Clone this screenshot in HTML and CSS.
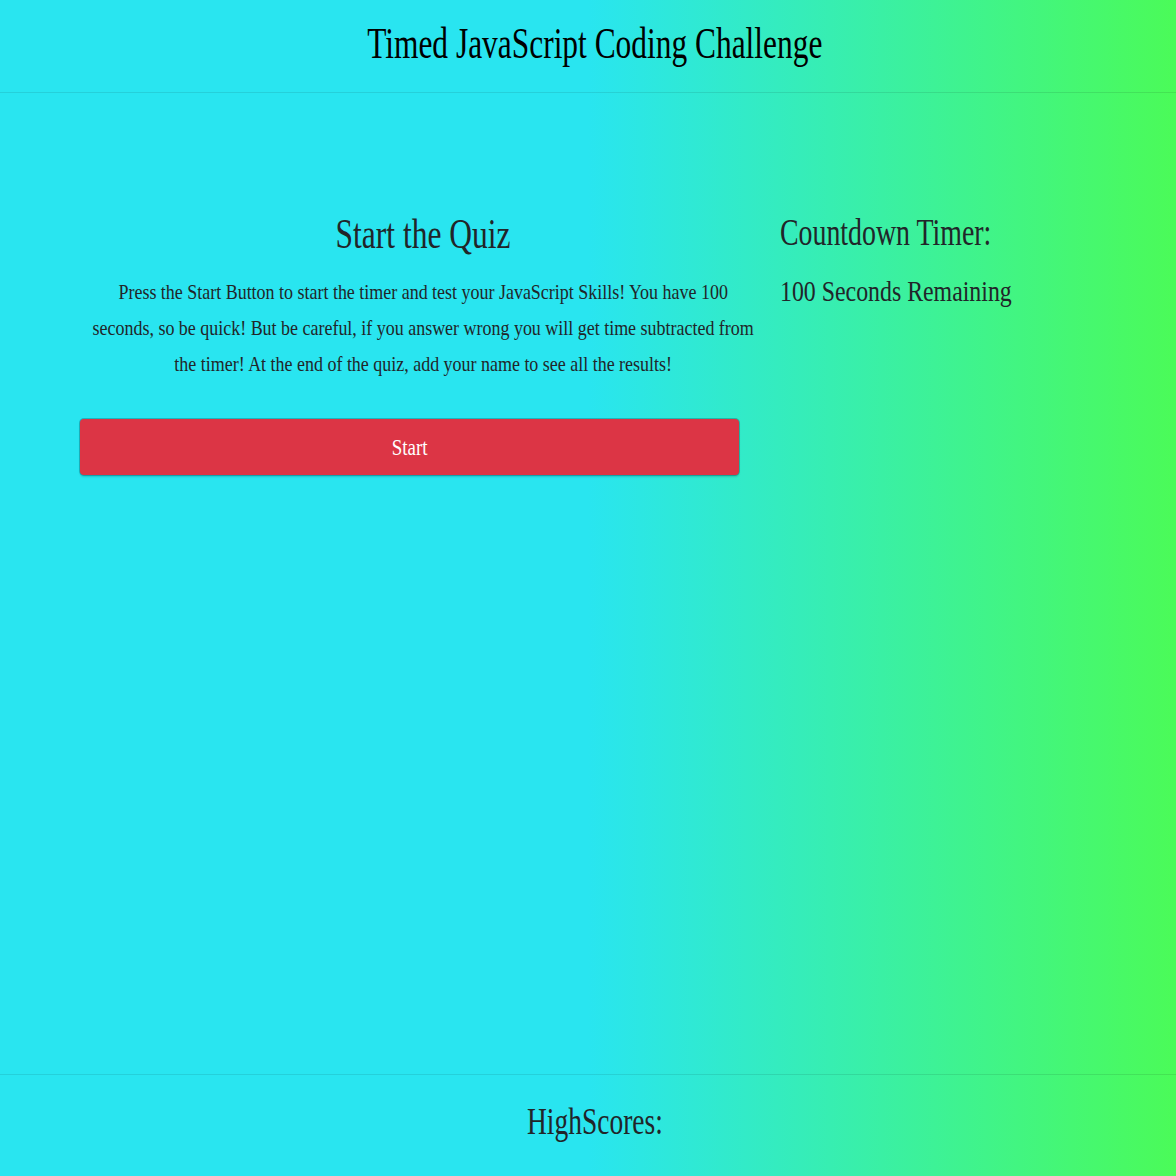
FILE: index.html
```html
<!DOCTYPE html>
<html lang="en">
<head>
<meta charset="utf-8">
<title>Timed JavaScript Coding Challenge</title>
<link rel="stylesheet" href="styles.css">
</head>
<body>
<div class="page">
  <header class="site-header">
    <h1 class="site-title">Timed JavaScript Coding Challenge</h1>
  </header>
  <main class="main">
    <section class="quiz">
      <h2 class="quiz-title">Start the Quiz</h2>
      <p class="quiz-text">Press the Start Button to start the timer and test your JavaScript Skills! You have 100 seconds, so be quick! But be careful, if you answer wrong you will get time subtracted from the timer! At the end of the quiz, add your name to see all the results!</p>
      <button class="start-btn" type="button"><span class="start-label">Start</span></button>
    </section>
    <aside class="timer">
      <h2 class="timer-title">Countdown Timer:</h2>
      <p class="timer-text">100 Seconds Remaining</p>
    </aside>
  </main>
  <footer class="site-footer">
    <h2 class="scores-title">HighScores:</h2>
  </footer>
</div>
</body>
</html>
```
FILE: styles.css
```css
html, body {
  margin: 0;
  padding: 0;
  overflow: hidden;
}
body {
  font-family: "Liberation Serif", "DejaVu Serif", serif;
  color: #212529;
}
.page {
  width: 1176px;
  height: 1176px;
  background: linear-gradient(to right, #29e5f0 0%, #29e5f0 50%, #4bfb58 100%);
  display: flex;
  flex-direction: column;
}
.site-header {
  box-sizing: border-box;
  height: 93px;
  padding: 18px 0 0 13px;
  border-bottom: 1px solid rgba(0, 0, 0, 0.09);
  text-align: center;
}
.site-title {
  display: inline-block;
  margin: 0;
  font-size: 44px;
  line-height: 1.2;
  font-weight: normal;
  color: #000;
  transform: scaleX(0.714);
}
.main {
  flex: 1;
  display: grid;
  grid-template-columns: 686px 1fr;
  column-gap: 14px;
  padding: 116px 0 0 80px;
  align-items: start;
}
.quiz {
  display: flex;
  flex-direction: column;
  align-items: flex-start;
}
.quiz-title {
  align-self: stretch;
  margin: 0;
  font-size: 42px;
  line-height: 1.2;
  font-weight: normal;
  text-align: center;
  transform: scaleX(0.75);
}
.quiz-text {
  box-sizing: border-box;
  width: 777px;
  margin: 15px 0 0 11px;
  font-size: 21px;
  line-height: 36px;
  text-align: center;
  transform: scaleX(0.855);
  transform-origin: 0 0;
}
.start-btn {
  margin-top: 37px;
  width: 659px;
  height: 56px;
  border: none;
  border-radius: 4px;
  background: #dc3545;
  color: #fff;
  font-family: inherit;
  font-size: 24px;
  box-shadow: 0 0 0 1px rgba(0, 90, 100, 0.35), 0 2px 2px rgba(0, 0, 0, 0.15);
}
.start-label {
  display: inline-block;
  transform: scaleX(0.79);
}
.timer-title {
  margin: 0;
  padding-top: 1px;
  font-size: 38px;
  line-height: 1.2;
  font-weight: normal;
  transform: scaleX(0.733);
  transform-origin: 0 0;
}
.timer-text {
  margin: 18px 0 0;
  font-size: 29px;
  line-height: 1.2;
  transform: scaleX(0.822);
  transform-origin: 0 0;
}
.site-footer {
  box-sizing: border-box;
  height: 102px;
  border-top: 1px solid rgba(0, 0, 0, 0.09);
  padding: 24px 0 0 13px;
  text-align: center;
}
.scores-title {
  display: inline-block;
  margin: 0;
  font-size: 38px;
  line-height: 1.2;
  font-weight: normal;
  transform: scaleX(0.723);
}
```
